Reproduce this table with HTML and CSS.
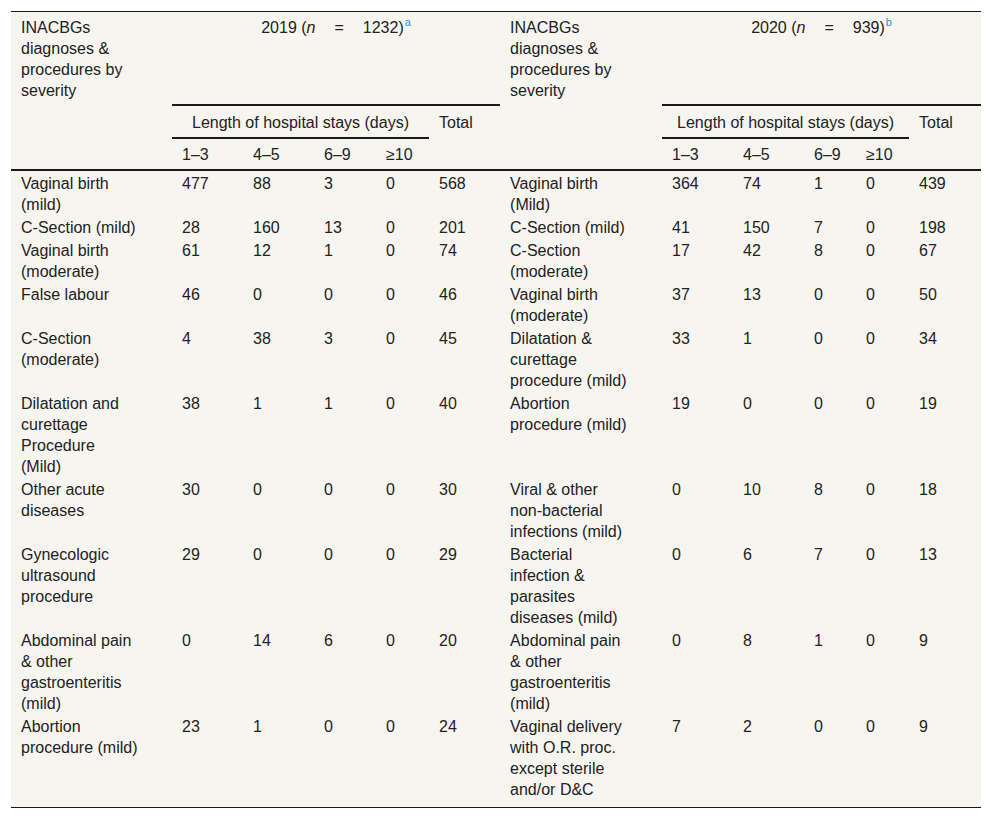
FILE: index.html
```html
<!DOCTYPE html>
<html lang="en">
<head>
<meta charset="utf-8">
<title>INACBGs table</title>
<link rel="stylesheet" href="styles.css">
</head>
<body>
<div class="wrap">
<table class="t">
  <colgroup>
    <col class="c-lab-l"><col class="c71"><col class="c71"><col class="c62"><col class="c53"><col class="c71">
    <col class="c-lab-r"><col class="c71"><col class="c71"><col class="c52"><col class="c53"><col class="c72">
  </colgroup>
  <thead>
    <tr class="h1">
      <th rowspan="3" class="lab lab-l edge">INACBGs diagnoses &amp; procedures by severity</th>
      <th colspan="5" class="yr">2019 (<i>n</i><span class="eq">=</span>1232)<sup>a</sup></th>
      <th rowspan="3" class="lab lab-r edge">INACBGs diagnoses &amp; procedures by severity</th>
      <th colspan="5" class="yr">2020 (<i>n</i><span class="eq">=</span>939)<sup>b</sup></th>
    </tr>
    <tr class="h2">
      <th colspan="4" class="los">Length of hospital stays (days)</th>
      <th rowspan="2" class="edge">Total</th>
      <th colspan="4" class="los">Length of hospital stays (days)</th>
      <th rowspan="2" class="edge">Total</th>
    </tr>
    <tr class="h3">
      <th class="edge">1–3</th><th class="edge">4–5</th><th class="edge">6–9</th><th class="edge">≥10</th>
      <th class="edge">1–3</th><th class="edge">4–5</th><th class="edge">6–9</th><th class="edge">≥10</th>
    </tr>
  </thead>
  <tbody>
    <tr>
      <td class="lab lab-l">Vaginal birth (mild)</td><td>477</td><td>88</td><td>3</td><td>0</td><td>568</td>
      <td class="lab lab-r">Vaginal birth (Mild)</td><td>364</td><td>74</td><td>1</td><td>0</td><td>439</td>
    </tr>
    <tr>
      <td class="lab lab-l">C-Section (mild)</td><td>28</td><td>160</td><td>13</td><td>0</td><td>201</td>
      <td class="lab lab-r">C-Section (mild)</td><td>41</td><td>150</td><td>7</td><td>0</td><td>198</td>
    </tr>
    <tr>
      <td class="lab lab-l">Vaginal birth (moderate)</td><td>61</td><td>12</td><td>1</td><td>0</td><td>74</td>
      <td class="lab lab-r">C-Section (moderate)</td><td>17</td><td>42</td><td>8</td><td>0</td><td>67</td>
    </tr>
    <tr>
      <td class="lab lab-l">False labour</td><td>46</td><td>0</td><td>0</td><td>0</td><td>46</td>
      <td class="lab lab-r">Vaginal birth (moderate)</td><td>37</td><td>13</td><td>0</td><td>0</td><td>50</td>
    </tr>
    <tr>
      <td class="lab lab-l">C-Section (moderate)</td><td>4</td><td>38</td><td>3</td><td>0</td><td>45</td>
      <td class="lab lab-r">Dilatation &amp; curettage procedure (mild)</td><td>33</td><td>1</td><td>0</td><td>0</td><td>34</td>
    </tr>
    <tr>
      <td class="lab lab-l">Dilatation and curettage Procedure (Mild)</td><td>38</td><td>1</td><td>1</td><td>0</td><td>40</td>
      <td class="lab lab-r">Abortion procedure (mild)</td><td>19</td><td>0</td><td>0</td><td>0</td><td>19</td>
    </tr>
    <tr>
      <td class="lab lab-l">Other acute diseases</td><td>30</td><td>0</td><td>0</td><td>0</td><td>30</td>
      <td class="lab lab-r">Viral &amp; other non-bacterial infections (mild)</td><td>0</td><td>10</td><td>8</td><td>0</td><td>18</td>
    </tr>
    <tr>
      <td class="lab lab-l">Gynecologic ultrasound procedure</td><td>29</td><td>0</td><td>0</td><td>0</td><td>29</td>
      <td class="lab lab-r">Bacterial infection &amp; parasites diseases (mild)</td><td>0</td><td>6</td><td>7</td><td>0</td><td>13</td>
    </tr>
    <tr>
      <td class="lab lab-l">Abdominal pain &amp; other gastroenteritis (mild)</td><td>0</td><td>14</td><td>6</td><td>0</td><td>20</td>
      <td class="lab lab-r">Abdominal pain &amp; other gastroenteritis (mild)</td><td>0</td><td>8</td><td>1</td><td>0</td><td>9</td>
    </tr>
    <tr class="last">
      <td class="lab lab-l">Abortion procedure (mild)</td><td>23</td><td>1</td><td>0</td><td>0</td><td>24</td>
      <td class="lab lab-r">Vaginal delivery with O.R. proc. except sterile and/or D&amp;C</td><td>7</td><td>2</td><td>0</td><td>0</td><td>9</td>
    </tr>
  </tbody>
</table>
</div>
</body>
</html>
```

FILE: styles.css
```css
html, body {
  margin: 0;
  padding: 0;
  background: #ffffff;
}

.wrap {
  padding: 11px;
}

.t {
  width: 970px;
  table-layout: fixed;
  border-collapse: separate;
  border-spacing: 0;
  background: #f7f5f0;
  border-top: 1px solid #1a1a1a;
  border-bottom: 1px solid #1a1a1a;
  font-family: "Liberation Sans", Arial, Helvetica, sans-serif;
  font-size: 16px;
  line-height: 21px;
  color: #222222;
}

.c-lab-l { width: 161px; }
.c-lab-r { width: 162px; }
.c71 { width: 71px; }
.c72 { width: 72px; }
.c62 { width: 62px; }
.c53 { width: 53px; }
.c52 { width: 52px; }

.t th {
  font-weight: normal;
  text-align: left;
  vertical-align: top;
  padding: 6px 10px 0;
}

.t td {
  vertical-align: top;
  padding: 2px 10px 0;
}

.t .lab-l { padding-right: 34px; }
.t .lab-r { padding-right: 35px; }

.h1 { height: 94px; }
.h2 { height: 33px; }
.h3 { height: 32px; }

.h1 th { padding-top: 5px; }
.h3 th { padding-top: 5px; }

.t th.yr {
  text-align: center;
  border-bottom: 2px solid #1a1a1a;
}

.t th.los {
  text-align: center;
  border-bottom: 2px solid #1a1a1a;
}

.t th.edge {
  border-bottom: 2px solid #1a1a1a;
}

.yr i {
  font-style: italic;
}

.eq {
  margin: 0 19px;
}

.yr sup {
  font-size: 11px;
  line-height: 0;
  vertical-align: 7px;
  color: #2a93d5;
  margin-left: 1px;
}

.last td {
  padding-bottom: 7px;
}
```
